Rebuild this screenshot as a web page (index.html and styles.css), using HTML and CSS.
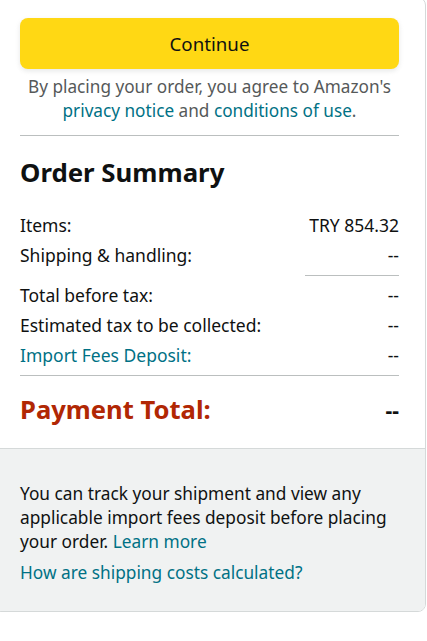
FILE: index.html
```html
<!DOCTYPE html>
<html>
<head>
<meta charset="utf-8">
<link rel="stylesheet" href="styles.css">
</head>
<body>
<div class="card">
  <div class="main">
    <button class="continue">Continue</button>
    <p class="agree">By placing your order, you agree to Amazon's <a href="#">privacy notice</a> and <a href="#">conditions of use</a>.</p>
    <hr class="sep">
    <h2 class="title">Order Summary</h2>
    <div class="rows">
      <div class="row"><span>Items:</span><span>TRY 854.32</span></div>
      <div class="row"><span>Shipping &amp; handling:</span><span>--</span></div>
      <div class="subline"></div>
      <div class="row"><span>Total before tax:</span><span>--</span></div>
      <div class="row"><span>Estimated tax to be collected:</span><span>--</span></div>
      <div class="row"><a href="#">Import Fees Deposit:</a><span>--</span></div>
    </div>
    <hr class="sep sep2">
    <div class="total"><span class="tlabel">Payment Total:</span><span class="tval">--</span></div>
  </div>
  <div class="foot">
    <p class="track">You can track your shipment and view any applicable import fees deposit before placing your order. <a href="#">Learn more</a></p>
    <p class="how"><a href="#">How are shipping costs calculated?</a></p>
  </div>
</div>
</body>
</html>
```
FILE: styles.css
```css
* { box-sizing: border-box; }
html, body { margin: 0; padding: 0; background: #fff; }
body {
  font-family: "Noto Sans", "Open Sans", Arial, sans-serif;
  color: #0F1111;
  font-size: 17.3px;
}
a { color: #007185; text-decoration: none; }
.card {
  width: 433px;
  margin: -3px 0 0 -7px;
  border: 1px solid #D5D9D9;
  border-radius: 8px;
  overflow: hidden;
}
.main { padding: 20px 26px 0; }
.continue {
  display: block;
  width: 100%;
  height: 51px;
  border: 0;
  border-radius: 8px;
  background: #FFD814;
  color: #0F1111;
  font-family: inherit;
  font-size: 18.7px;
  box-shadow: 0 2px 5px 0 rgba(213, 217, 217, .6);
}
.agree {
  margin: 6px 0 0;
  text-align: center;
  color: #565959;
  font-size: 17.2px;
  line-height: 24px;
}
.sep {
  border: 0;
  border-top: 1px solid #BBBFBF;
  margin: 12px 0 0;
}
.title {
  margin: 20px 0 0;
  font-size: 25.8px;
  font-weight: 700;
  line-height: 32px;
}
.rows { margin-top: 22px; }
.row {
  display: flex;
  justify-content: space-between;
  font-size: 17.5px;
  line-height: 30px;
}
.subline {
  margin: 5px 0 4px auto;
  width: 94px;
  border-top: 1px solid #BBBFBF;
}
.sep2 { margin-top: 5px; }
.total {
  display: flex;
  justify-content: space-between;
  align-items: center;
  margin-top: 18px;
  padding-bottom: 22px;
  font-weight: 700;
}
.tlabel { color: #B12704; font-size: 25.6px; line-height: 32px; }
.tval { font-size: 21px; }
.foot {
  background: #F0F2F2;
  border-top: 1px solid #D5D9D9;
  padding: 33px 26px 26px;
}
.foot p { margin: 0; font-size: 17.3px; line-height: 24px; }
.how { margin-top: 7px !important; }
```
